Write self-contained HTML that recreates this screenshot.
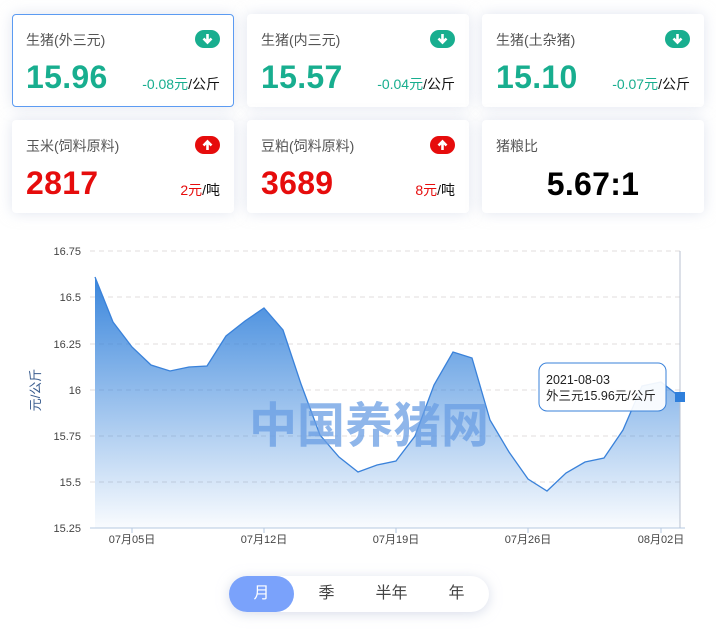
<!DOCTYPE html>
<html><head><meta charset="utf-8"><style>
*{margin:0;padding:0;box-sizing:border-box}
body{width:716px;height:637px;background:#fff;font-family:"Liberation Sans","Noto Sans CJK SC",sans-serif;position:relative;overflow:hidden}
.card{position:absolute;width:222px;height:93px;background:#fff;border-radius:4px;box-shadow:0 0 14px rgba(200,208,225,.55)}
.card.sel{border:1px solid #5b9bf2}
.t{position:absolute;left:14px;top:16px;font-size:14px;color:#555}
.ic{position:absolute;right:14px;top:16px;width:25px;height:18px;border-radius:9px}
.ic svg{display:block}
.v{position:absolute;left:14px;top:45px;font-size:32px;font-weight:bold;letter-spacing:.3px}
.u{position:absolute;right:14px;top:60px;font-size:14px;color:#111}
.g{color:#18ae8f}.r{color:#e60c0c}
</style></head><body>
<div class="card sel" style="left:12px;top:14px"><div class="t" style="left:13px;top:15px">生猪(外三元)</div><div class="ic" style="background:#18ae8f;right:13px;top:15px"><svg width="25" height="18"><path d="M12.5 4v8M8.5 8.5l4 4 4-4" stroke="#fff" stroke-width="2.6" fill="none"/></svg></div><div class="v g" style="left:13px;top:44px">15.96</div><div class="u" style="right:13px;top:59px"><span class="g">-0.08元</span>/公斤</div></div>
<div class="card" style="left:247px;top:14px"><div class="t">生猪(内三元)</div><div class="ic" style="background:#18ae8f"><svg width="25" height="18"><path d="M12.5 4v8M8.5 8.5l4 4 4-4" stroke="#fff" stroke-width="2.6" fill="none"/></svg></div><div class="v g">15.57</div><div class="u"><span class="g">-0.04元</span>/公斤</div></div>
<div class="card" style="left:482px;top:14px"><div class="t">生猪(土杂猪)</div><div class="ic" style="background:#18ae8f"><svg width="25" height="18"><path d="M12.5 4v8M8.5 8.5l4 4 4-4" stroke="#fff" stroke-width="2.6" fill="none"/></svg></div><div class="v g">15.10</div><div class="u"><span class="g">-0.07元</span>/公斤</div></div>
<div class="card" style="left:12px;top:120px"><div class="t">玉米(饲料原料)</div><div class="ic" style="background:#e60c0c"><svg width="25" height="18"><path d="M12.5 14V6M8.5 9.5l4-4 4 4" stroke="#fff" stroke-width="2.6" fill="none"/></svg></div><div class="v r">2817</div><div class="u"><span class="r">2元</span>/吨</div></div>
<div class="card" style="left:247px;top:120px"><div class="t">豆粕(饲料原料)</div><div class="ic" style="background:#e60c0c"><svg width="25" height="18"><path d="M12.5 14V6M8.5 9.5l4-4 4 4" stroke="#fff" stroke-width="2.6" fill="none"/></svg></div><div class="v r">3689</div><div class="u"><span class="r">8元</span>/吨</div></div>
<div class="card" style="left:482px;top:120px"><div class="t">猪粮比</div><div class="v" style="left:0;width:222px;text-align:center;top:46px;color:#000">5.67:1</div></div>

<svg style="position:absolute;left:0;top:0" width="716" height="637">
<defs><linearGradient id="gr" x1="0" y1="0" x2="0" y2="1"><stop offset="0" stop-color="#3a86dc"/><stop offset="1" stop-color="#3a86dc" stop-opacity="0.03"/></linearGradient></defs>
<g stroke="#e0dcdc" stroke-dasharray="5,4" stroke-width="1">
<line x1="90" y1="251" x2="680" y2="251"/><line x1="90" y1="297" x2="680" y2="297"/><line x1="90" y1="344" x2="680" y2="344"/><line x1="90" y1="390" x2="680" y2="390"/><line x1="90" y1="436" x2="680" y2="436"/><line x1="90" y1="482" x2="680" y2="482"/>
</g>
<g font-size="11" fill="#444" text-anchor="end" font-family="Liberation Sans,sans-serif">
<text x="81" y="255">16.75</text><text x="81" y="301">16.5</text><text x="81" y="348">16.25</text><text x="81" y="394">16</text><text x="81" y="440">15.75</text><text x="81" y="486">15.5</text><text x="81" y="532">15.25</text></g>
<text transform="translate(40,390) rotate(-90)" text-anchor="middle" font-size="13" fill="#3a5d8f">元/公斤</text>
<path d="M95,277 L113,322 132,347 151,365 170,371 189,367 207,366 226,336 245,321 264,308 283,330 301,384 320,435 339,457 358,472 377,465 396,461 415,436 434,385 453,352 472,358 490,420 509,452 528,479 547,491 566,473 585,462 604,458 623,430 642,386 661,382 680,397 L680,528 L95,528Z" fill="url(#gr)"/>
<path d="M95,277 L113,322 132,347 151,365 170,371 189,367 207,366 226,336 245,321 264,308 283,330 301,384 320,435 339,457 358,472 377,465 396,461 415,436 434,385 453,352 472,358 490,420 509,452 528,479 547,491 566,473 585,462 604,458 623,430 642,386 661,382 680,397" fill="none" stroke="#3a82da" stroke-width="1.3"/>
<line x1="680" y1="251" x2="680" y2="528" stroke="#b9c2d0"/>
<line x1="90" y1="528" x2="685" y2="528" stroke="#b5c8e0"/>
<g stroke="#b5c8e0"><line x1="132" y1="528" x2="132" y2="533"/><line x1="264" y1="528" x2="264" y2="533"/><line x1="396" y1="528" x2="396" y2="533"/><line x1="528" y1="528" x2="528" y2="533"/><line x1="661" y1="528" x2="661" y2="533"/></g>
<g font-size="11" fill="#444" text-anchor="middle"><text x="132" y="543">07月05日</text><text x="264" y="543">07月12日</text><text x="396" y="543">07月19日</text><text x="528" y="543">07月26日</text><text x="661" y="543">08月02日</text></g>
<text x="369" y="442" text-anchor="middle" font-size="48" font-weight="bold" fill="#6a9de3" fill-opacity="0.75" font-family="Noto Sans CJK SC,sans-serif">中国养猪网</text>
<rect x="675" y="392" width="10" height="10" fill="#2f7fdb"/>
<rect x="539" y="363" width="127" height="48" rx="8" fill="#fff" fill-opacity="0.92" stroke="#3a82da"/>
<text x="546" y="384" font-size="12.5" fill="#222">2021-08-03</text>
<text x="546" y="400" font-size="12.5" fill="#222">外三元15.96元/公斤</text>
</svg>

<div style="position:absolute;left:229px;top:576px;width:260px;height:36px;border-radius:18px;background:#fff;box-shadow:0 2px 12px rgba(190,198,220,.6)"></div>
<div style="position:absolute;left:229px;top:576px;width:65px;height:36px;border-radius:18px;background:#7aa2fb"></div>
<div style="position:absolute;left:229px;top:576px;width:260px;height:36px;display:flex;font-size:16px;line-height:36px;color:#444">
<span style="width:65px;text-align:center;color:#fff">月</span><span style="width:65px;text-align:center">季</span><span style="width:65px;text-align:center">半年</span><span style="width:65px;text-align:center">年</span></div>
</body></html>
